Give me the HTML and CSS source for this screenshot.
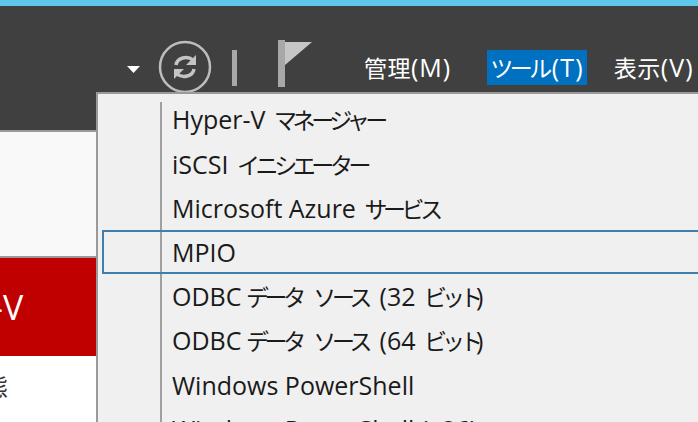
FILE: index.html
```html
<!DOCTYPE html>
<html lang="ja">
<head>
<meta charset="utf-8">
<title>サーバー マネージャー</title>
<link rel="stylesheet" href="styles.css">
</head>
<body>
<div class="accent"></div>
<header class="header">
  <div class="toolbar">
    <svg class="tools" width="190" height="60" viewBox="0 0 190 60" aria-hidden="true">
      <path d="M0 26h13l-6.500 7z" fill="#fff"/>
      <circle cx="58" cy="27" r="25" fill="none" stroke="#bdbdbd" stroke-width="2.500"/>
      <path d="M49 25c1-7 11-10 17-5" fill="none" stroke="#c4c4c4" stroke-width="3.500"/>
      <path d="M69 15v10h-10z" fill="#c4c4c4"/>
      <path d="M67 29c-1 7-11 10-17 5" fill="none" stroke="#c4c4c4" stroke-width="3.500"/>
      <path d="M47 39v-10h10z" fill="#c4c4c4"/>
      <rect x="105" y="10" width="5" height="36" fill="#a8a8a8"/>
      <rect x="151" y="0" width="7" height="47" fill="#a8a8a8"/>
      <path d="M158 2h27l-27 23z" fill="#c6c6c6"/>
    </svg>
    <nav class="menubar">
      <span class="menu-item"><span class="kanji">管理</span>(M)</span>
      <span class="menu-item is-open"><span class="kana-menu">ツール</span>(T)</span>
      <span class="menu-item"><span class="kanji">表示</span>(V)</span>
    </nav>
  </div>
</header>
<main class="content">
  <div class="blank"></div>
  <div class="banner">-V</div>
  <div class="below">態</div>
</main>
<ul class="dropdown">
  <li class="row">Hyper-V <span class="kana">マネージャー</span></li>
  <li class="row">iSCSI <span class="kana">イニシエーター</span></li>
  <li class="row">Microsoft Azure <span class="kana">サービス</span></li>
  <li class="row is-hover">MPIO</li>
  <li class="row">ODBC <span class="kana source">データ ソース</span> (32 <span class="kana bit">ビット</span>)</li>
  <li class="row">ODBC <span class="kana source">データ ソース</span> (64 <span class="kana bit">ビット</span>)</li>
  <li class="row">Windows PowerShell</li>
  <li class="row">Windows PowerShell (x86)</li>
</ul>
</body>
</html>
```
FILE: styles.css
```css
* { box-sizing: border-box; }
html, body { margin: 0; height: 100%; }
body {
  width: 698px;
  height: 422px;
  overflow: hidden;
  position: relative;
  background: #fff;
  font-family: "Open Sans", "Noto Sans CJK JP", sans-serif;
}
.accent { height: 6px; background: #5fc6ec; }
.header {
  height: 126px;
  background: #404040;
  border-bottom: 2px solid #9a9a9a;
}
.toolbar {
  display: flex;
  align-items: flex-start;
  padding: 34px 0 0 127px;
}
.tools { flex: none; }
.menubar {
  display: flex;
  gap: 33px;
  margin: 10px 0 0 44px;
  color: #fff;
  font-size: 25px;
  line-height: 35px;
  letter-spacing: 1px;
  white-space: nowrap;
}
.menu-item { flex: none; height: 35px; padding: 0 3px; }
.is-open { background: #0070c0; margin-right: -9px; letter-spacing: 1.200px; }
.kanji { font-size: 23px; letter-spacing: 0.500px; }
.kana-menu { font-size: 23px; letter-spacing: -3.500px; margin-right: 3px; }
.kana { font-size: 23px; letter-spacing: -4.400px; word-spacing: 12px; margin: 0 4px 0 2px; }
.source { word-spacing: 10px; margin: 0 5px 0 -2px; }
.bit { letter-spacing: -5px; margin: 0 -2px 0 2px; }
.content { display: flex; flex-direction: column; }
.blank { height: 126px; background: #f9f9f9; border-bottom: 2px solid #9a9a9a; }
.banner {
  height: 98px;
  background: #c00000;
  color: #fff;
  font-size: 34px;
  line-height: 98px;
  text-indent: -8px;
}
.below {
  font-size: 24px;
  line-height: 62px;
  color: #333;
  text-indent: -16px;
}
.dropdown {
  position: absolute;
  left: 96px;
  top: 92px;
  width: 620px;
  height: 330px;
  margin: 0;
  padding: 3.400px 0 0 4px;
  list-style: none;
  background: #f0f0f0 linear-gradient(#a0a0a0, #a0a0a0) 62px 8px / 2px 100% no-repeat;
  border: solid #9a9a9a;
  border-width: 2px 0 0 2px;
  color: #1a1a1a;
  font-size: 25px;
  overflow: hidden;
}
.row {
  height: 44.200px;
  line-height: 44px;
  padding-left: 70px;
  white-space: nowrap;
}
.is-hover { border: 2px solid #3f7fb0; line-height: 40px; padding-left: 68px; }
```
